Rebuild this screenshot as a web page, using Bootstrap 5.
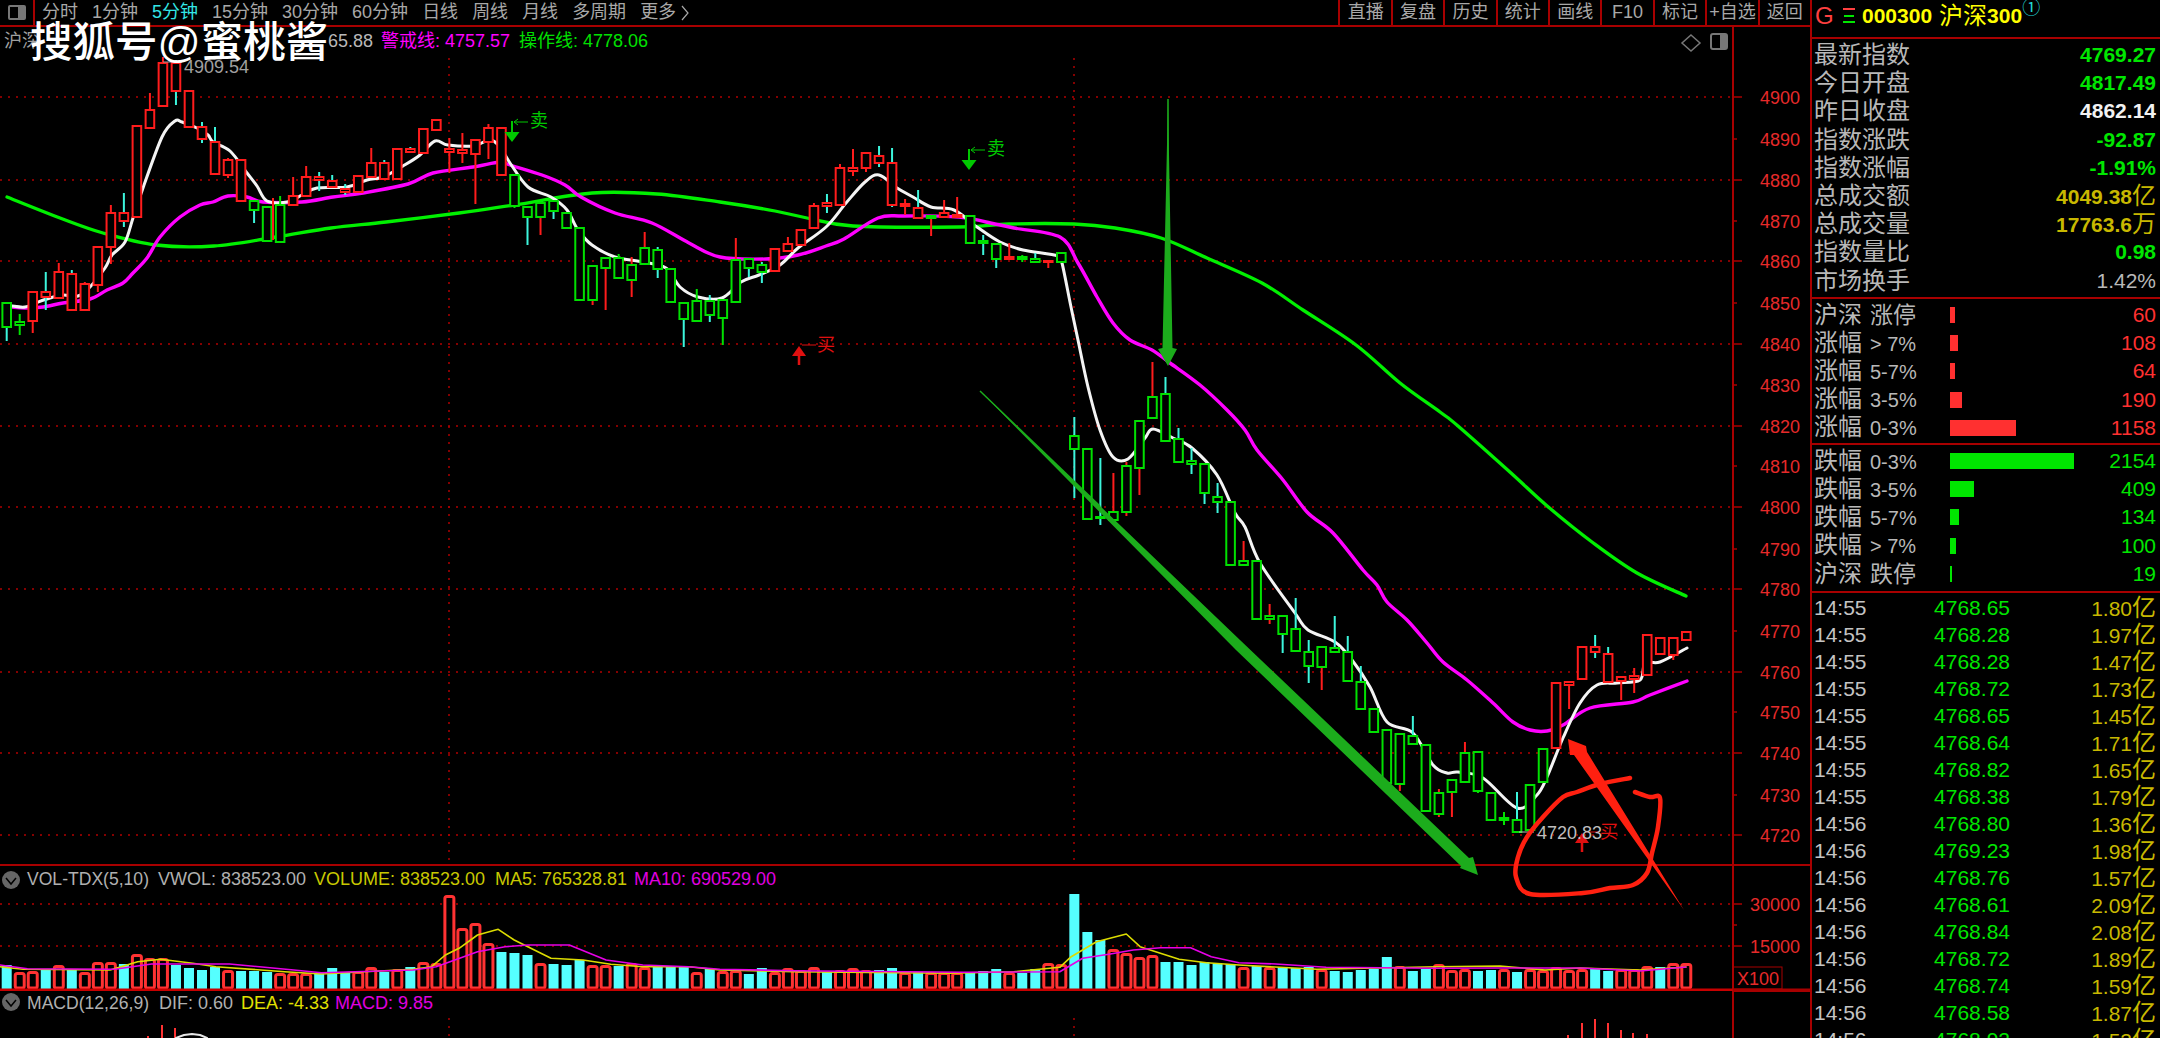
<!DOCTYPE html>
<html lang="zh-CN">
<head>
<meta charset="utf-8">
<title>沪深300</title>
<link href="https://cdn.jsdelivr.net/npm/bootstrap@5.3.0/dist/css/bootstrap.min.css" rel="stylesheet">
<style>
html,body{height:1038px;overflow:hidden;background:#000;}
body{font-family:"Liberation Sans","Noto Sans CJK SC",sans-serif;color:#b8b8b8;}
.shell{width:2160px;height:1038px;}
.leftside{width:1810px;}
.toolbar{height:27px;border-bottom:2px solid #a80000;font-size:18px;line-height:25px;white-space:nowrap;}
.tool-icon{width:35px;height:25px;border-right:2px solid #a80000;}
.tool-glyph{width:18px;height:15px;border:2px solid #777;border-radius:2px;background:linear-gradient(90deg,transparent 60%,#777 60%);}
.period-list{gap:14px;padding-left:7px;color:#a8a8a8;}
.period-active{color:#33e6e6;}
.tool-btn{width:52.4px;text-align:center;border-left:2px solid #a80000;color:#a8a8a8;}
.chartbox{height:1011px;}
.chartsvg{display:block;width:1810px;height:1011px;}
.chartsvg text{font-family:"Liberation Sans","Noto Sans CJK SC",sans-serif;font-size:18px;}
.watermark{position:absolute;left:30px;top:14px;font-size:42.5px;line-height:58px;color:#fff;font-weight:500;white-space:nowrap;}
.sidepanel{width:350px;border-left:2px solid #a80000;padding-left:2px;}
.headbar{height:39px;border-bottom:2px solid #a80000;font-size:21px;line-height:32px;color:#ff0;font-weight:700;margin-left:-2px;padding-left:3px;padding-bottom:6px;white-space:nowrap;}
.code-g{color:#ff4040;width:28px;font-weight:400;font-size:24px;}
.code-bars{width:12px;height:15px;border-top:2px solid #ff4040;border-bottom:2px solid #00e600;position:relative;margin-right:7px;}
.code-bars::after{content:"";position:absolute;left:1px;right:1px;top:4.5px;height:2px;background:#00e600;}
.code-cn{font-weight:400;font-size:24px;margin:0 0 0 7px;}
.code-sup{color:#22d8d8;font-weight:400;font-size:18px;line-height:16px;}
.rowsblock{padding-top:2px;padding-right:4px;}
.inforow{height:28.2px;line-height:28.2px;font-size:24px;white-space:nowrap;}
.valnum{font-size:21px;font-weight:700;}
.valnum span{font-size:24px;font-weight:400;}
.v-green{color:#00e600;}
.v-white{color:#f2f2f2;}
.v-olive{color:#c8b800;}
.v-gray{color:#b8b8b8;font-weight:400;}
.v-red{color:#ff3030;font-weight:400;}
.v-greenlite{color:#00e600;font-weight:400;}
.divider{height:2px;background:#a80000;margin-left:-2px;}
.block-info{height:258px;}
.block-up{height:144px;}
.block-down{height:146px;}
.lab-pct{font-size:20px;margin-left:8px;}
.lab-stop{font-size:23px;margin-left:8px;}
.lab-cell{width:136px;}
.barcell{width:126px;}
.bar-up{height:16px;background:#ff3030;}
.bar-down{height:16px;background:#00e600;}
.tradelist{padding-right:4px;padding-top:1px;}
.traderow{height:27px;line-height:27px;font-size:21px;white-space:nowrap;}
.t-time{width:110px;color:#c4c4c4;}
.t-price{width:86px;text-align:right;color:#00e600;}
.t-amt{text-align:right;color:#c8b800;}
.t-amt span{font-size:24px;}
</style>
</head>
<body>
<div class="shell d-flex">
  <div class="leftside d-flex flex-column position-relative">
    <div class="toolbar d-flex justify-content-between">
      <div class="d-flex">
        <div class="tool-icon d-flex align-items-center justify-content-center"><div class="tool-glyph"></div></div>
        <div class="period-list d-flex">
          <span>分时</span><span>1分钟</span><span class="period-active">5分钟</span><span>15分钟</span><span>30分钟</span><span>60分钟</span><span>日线</span><span>周线</span><span>月线</span><span>多周期</span>
          <span>更多 <svg width="8" height="16" viewBox="0 0 8 16"><path d="M1 1l6 7-6 7" fill="none" stroke="#a8a8a8" stroke-width="1.2"/></svg></span>
        </div>
      </div>
      <div class="d-flex pe-0">
        <span class="tool-btn">直播</span><span class="tool-btn">复盘</span><span class="tool-btn">历史</span><span class="tool-btn">统计</span><span class="tool-btn">画线</span><span class="tool-btn">F10</span><span class="tool-btn">标记</span><span class="tool-btn">+自选</span><span class="tool-btn">返回</span>
      </div>
    </div>
    <div class="chartbox">
      <svg class="chartsvg" id="chart" viewBox="0 27 1810 1011" xmlns="http://www.w3.org/2000/svg"></svg>
    </div>
    <div class="watermark">搜狐号@蜜桃酱</div>
  </div>
  <aside class="sidepanel flex-grow-1 overflow-hidden">
    <div class="headbar d-flex align-items-center">
      <span class="code-g">G</span><span class="code-bars"></span><span>000300</span><span class="code-cn">沪深</span><span>300</span><span class="code-sup align-self-start">①</span>
    </div>
    <div class="block-info rowsblock">
      <div class="inforow d-flex justify-content-between"><span>最新指数</span><span class="valnum v-green">4769.27</span></div>
      <div class="inforow d-flex justify-content-between"><span>今日开盘</span><span class="valnum v-green">4817.49</span></div>
      <div class="inforow d-flex justify-content-between"><span>昨日收盘</span><span class="valnum v-white">4862.14</span></div>
      <div class="inforow d-flex justify-content-between"><span>指数涨跌</span><span class="valnum v-green">-92.87</span></div>
      <div class="inforow d-flex justify-content-between"><span>指数涨幅</span><span class="valnum v-green">-1.91%</span></div>
      <div class="inforow d-flex justify-content-between"><span>总成交额</span><span class="valnum v-olive">4049.38<span>亿</span></span></div>
      <div class="inforow d-flex justify-content-between"><span>总成交量</span><span class="valnum v-olive">17763.6<span>万</span></span></div>
      <div class="inforow d-flex justify-content-between"><span>指数量比</span><span class="valnum v-green">0.98</span></div>
      <div class="inforow d-flex justify-content-between"><span>市场换手</span><span class="valnum v-gray">1.42%</span></div>
    </div>
    <div class="divider"></div>
    <div class="block-up rowsblock">
      <div class="inforow d-flex align-items-center"><span class="lab-cell">沪深<span class="lab-stop">涨停</span></span><span class="barcell"><div class="bar-up" style="width:5px"></div></span><span class="valnum v-red ms-auto">60</span></div>
      <div class="inforow d-flex align-items-center"><span class="lab-cell">涨幅<span class="lab-pct">&gt; 7%</span></span><span class="barcell"><div class="bar-up" style="width:8px"></div></span><span class="valnum v-red ms-auto">108</span></div>
      <div class="inforow d-flex align-items-center"><span class="lab-cell">涨幅<span class="lab-pct">5-7%</span></span><span class="barcell"><div class="bar-up" style="width:5px"></div></span><span class="valnum v-red ms-auto">64</span></div>
      <div class="inforow d-flex align-items-center"><span class="lab-cell">涨幅<span class="lab-pct">3-5%</span></span><span class="barcell"><div class="bar-up" style="width:12px"></div></span><span class="valnum v-red ms-auto">190</span></div>
      <div class="inforow d-flex align-items-center"><span class="lab-cell">涨幅<span class="lab-pct">0-3%</span></span><span class="barcell"><div class="bar-up" style="width:66px"></div></span><span class="valnum v-red ms-auto">1158</span></div>
    </div>
    <div class="divider"></div>
    <div class="block-down rowsblock">
      <div class="inforow d-flex align-items-center"><span class="lab-cell">跌幅<span class="lab-pct">0-3%</span></span><span class="barcell"><div class="bar-down" style="width:124px"></div></span><span class="valnum v-greenlite ms-auto">2154</span></div>
      <div class="inforow d-flex align-items-center"><span class="lab-cell">跌幅<span class="lab-pct">3-5%</span></span><span class="barcell"><div class="bar-down" style="width:24px"></div></span><span class="valnum v-greenlite ms-auto">409</span></div>
      <div class="inforow d-flex align-items-center"><span class="lab-cell">跌幅<span class="lab-pct">5-7%</span></span><span class="barcell"><div class="bar-down" style="width:9px"></div></span><span class="valnum v-greenlite ms-auto">134</span></div>
      <div class="inforow d-flex align-items-center"><span class="lab-cell">跌幅<span class="lab-pct">&gt; 7%</span></span><span class="barcell"><div class="bar-down" style="width:6px"></div></span><span class="valnum v-greenlite ms-auto">100</span></div>
      <div class="inforow d-flex align-items-center"><span class="lab-cell">沪深<span class="lab-stop">跌停</span></span><span class="barcell"><div class="bar-down" style="width:1.5px"></div></span><span class="valnum v-greenlite ms-auto">19</span></div>
    </div>
    <div class="divider"></div>
    <div class="tradelist" id="trades">
      <div class="traderow d-flex"><span class="t-time">14:55</span><span class="t-price">4768.65</span><span class="t-amt flex-grow-1">1.80<span>亿</span></span></div>
      <div class="traderow d-flex"><span class="t-time">14:55</span><span class="t-price">4768.28</span><span class="t-amt flex-grow-1">1.97<span>亿</span></span></div>
      <div class="traderow d-flex"><span class="t-time">14:55</span><span class="t-price">4768.28</span><span class="t-amt flex-grow-1">1.47<span>亿</span></span></div>
      <div class="traderow d-flex"><span class="t-time">14:55</span><span class="t-price">4768.72</span><span class="t-amt flex-grow-1">1.73<span>亿</span></span></div>
      <div class="traderow d-flex"><span class="t-time">14:55</span><span class="t-price">4768.65</span><span class="t-amt flex-grow-1">1.45<span>亿</span></span></div>
      <div class="traderow d-flex"><span class="t-time">14:55</span><span class="t-price">4768.64</span><span class="t-amt flex-grow-1">1.71<span>亿</span></span></div>
      <div class="traderow d-flex"><span class="t-time">14:55</span><span class="t-price">4768.82</span><span class="t-amt flex-grow-1">1.65<span>亿</span></span></div>
      <div class="traderow d-flex"><span class="t-time">14:55</span><span class="t-price">4768.38</span><span class="t-amt flex-grow-1">1.79<span>亿</span></span></div>
      <div class="traderow d-flex"><span class="t-time">14:56</span><span class="t-price">4768.80</span><span class="t-amt flex-grow-1">1.36<span>亿</span></span></div>
      <div class="traderow d-flex"><span class="t-time">14:56</span><span class="t-price">4769.23</span><span class="t-amt flex-grow-1">1.98<span>亿</span></span></div>
      <div class="traderow d-flex"><span class="t-time">14:56</span><span class="t-price">4768.76</span><span class="t-amt flex-grow-1">1.57<span>亿</span></span></div>
      <div class="traderow d-flex"><span class="t-time">14:56</span><span class="t-price">4768.61</span><span class="t-amt flex-grow-1">2.09<span>亿</span></span></div>
      <div class="traderow d-flex"><span class="t-time">14:56</span><span class="t-price">4768.84</span><span class="t-amt flex-grow-1">2.08<span>亿</span></span></div>
      <div class="traderow d-flex"><span class="t-time">14:56</span><span class="t-price">4768.72</span><span class="t-amt flex-grow-1">1.89<span>亿</span></span></div>
      <div class="traderow d-flex"><span class="t-time">14:56</span><span class="t-price">4768.74</span><span class="t-amt flex-grow-1">1.59<span>亿</span></span></div>
      <div class="traderow d-flex"><span class="t-time">14:56</span><span class="t-price">4768.58</span><span class="t-amt flex-grow-1">1.87<span>亿</span></span></div>
      <div class="traderow d-flex"><span class="t-time">14:56</span><span class="t-price">4768.92</span><span class="t-amt flex-grow-1">1.53<span>亿</span></span></div>
    </div>
  </aside>
</div>
<script src="https://cdn.jsdelivr.net/npm/bootstrap@5.3.0/dist/js/bootstrap.bundle.min.js"></script>
<script>
(function(){
var RED='#ff1c1c',GRN='#00e000',CY='#3cf5dc',DR='#a80000';
var X=function(i){return 6.7+13.02*i;};
var s='';
function line(x1,y1,x2,y2,c,w,d){s+='<line x1="'+x1+'" y1="'+y1+'" x2="'+x2+'" y2="'+y2+'" stroke="'+c+'" stroke-width="'+(w||1)+'"'+(d?' stroke-dasharray="'+d+'"':'')+'/>';}
function poly(p,c,w){s+='<polyline points="'+p.map(function(a){return a.join(',');}).join(' ')+'" fill="none" stroke="'+c+'" stroke-width="'+w+'" stroke-linejoin="round" stroke-linecap="round"/>';}
function smooth(p,c,w){
 var d='M'+p[0][0]+' '+p[0][1];
 for(var i=0;i<p.length-1;i++){
  var a=p[Math.max(i-1,0)],b=p[i],e=p[i+1],f=p[Math.min(i+2,p.length-1)];
  d+='C'+(b[0]+(e[0]-a[0])/6).toFixed(1)+' '+(b[1]+(e[1]-a[1])/6).toFixed(1)+' '+(e[0]-(f[0]-b[0])/6).toFixed(1)+' '+(e[1]-(f[1]-b[1])/6).toFixed(1)+' '+e[0]+' '+e[1];
 }
 s+='<path d="'+d+'" fill="none" stroke="'+c+'" stroke-width="'+w+'" stroke-linejoin="round" stroke-linecap="round"/>';
}
function txt(x,y,t,c,extra){s+='<text x="'+x+'" y="'+y+'" fill="'+c+'" '+(extra||'')+'>'+t+'</text>';}
var DOT='2 6';
/* grid */
[97,180,261,344,426,507,589,672,753,835,904,946].forEach(function(y){line(0,y,1733,y,'#b00000',1.5,DOT);});
line(449,58,449,860,'#b00000',1.5,DOT);line(1074,58,1074,860,'#b00000',1.5,DOT);
line(449,1018,449,1038,'#b00000',1.5,DOT);line(1074,1018,1074,1038,'#b00000',1.5,DOT);
/* panes */
line(0,865,1810,865,DR,2);
line(1733,27,1733,1038,DR,2);
/* top right glyphs */
s+='<polygon points="1691,35 1700,43 1691,51 1682,43" fill="none" stroke="#777" stroke-width="1.5"/>';
s+='<rect x="1711" y="34" width="16" height="15" rx="2" fill="none" stroke="#777" stroke-width="2"/><rect x="1720" y="35" width="6" height="13" fill="#777"/>';
/* axis */
[[97,'4900',1],[139,'4890',0],[180,'4880',1],[221,'4870',0],[261,'4860',1],[303,'4850',0],[344,'4840',1],[385,'4830',0],[426,'4820',1],[466,'4810',0],[507,'4800',1],[549,'4790',0],[589,'4780',1],[631,'4770',0],[672,'4760',1],[712,'4750',0],[753,'4740',1],[795,'4730',0],[835,'4720',1],[904,'30000',1],[946,'15000',1]].forEach(function(a){
 line(1733,a[0],a[2]?1742:1737,a[0],DR,1.5);
 txt(1800,a[0]+7,a[1],'#e62a2a','text-anchor="end"');
});
line(1733,925,1737,925,DR,1.5);
/* lines */
var white=[[12,306],[25,307],[38,302],[50,298],[63,295],[78,296],[90,287],[105,268],[112,255],[125,242],[133,218],[143,188],[162,137],[175,121],[182,122],[197,128],[208,135],[213,142],[230,151],[247,173],[257,186],[267,201],[287,202],[302,195],[317,188],[347,187],[367,180],[383,177],[403,166],[420,155],[435,141],[448,145],[473,146],[490,140],[500,147],[510,163],[528,187],[551,197],[567,210],[578,230],[592,245],[615,257],[643,262],[666,268],[680,287],[698,297],[722,298],[741,282],[759,275],[780,265],[798,248],[826,227],[846,203],[865,182],[879,175],[897,188],[913,197],[931,207],[954,210],[977,227],[1000,242],[1023,250],[1058,256],[1062,263],[1071,307],[1078,340],[1088,387],[1100,430],[1113,457],[1128,459],[1145,438],[1153,429],[1173,438],[1192,448],[1217,475],[1235,513],[1245,527],[1260,563],[1295,613],[1308,630],[1335,642],[1352,660],[1370,687],[1387,722],[1413,733],[1433,765],[1447,773],[1458,772],[1483,778],[1517,808],[1537,795],[1547,777],[1563,738],[1580,703],[1597,685],[1617,683],[1640,680],[1645,663],[1660,662],[1687,648]];
var mag=[[12,307],[25,308],[43,307],[63,303],[90,299],[107,290],[123,283],[133,273],[147,258],[160,237],[180,217],[200,205],[213,202],[228,196],[247,197],[263,202],[302,202],[333,197],[363,193],[408,184],[433,173],[473,167],[500,162],[510,165],[542,175],[565,185],[581,197],[615,213],[652,223],[689,243],[720,257],[766,259],[798,255],[826,246],[844,239],[878,218],[904,216],[959,217],[986,222],[1014,228],[1060,237],[1078,263],[1097,297],[1113,323],[1130,340],[1152,350],[1170,363],[1200,385],[1227,410],[1245,430],[1257,450],[1283,480],[1307,512],[1333,533],[1363,570],[1377,585],[1387,602],[1407,620],[1427,643],[1443,662],[1467,680],[1493,703],[1513,722],[1530,730],[1547,731],[1563,725],[1590,708],[1633,702],[1650,695],[1687,681]];
var grn=[[7,197],[60,218],[103,233],[156,245],[214,246],[276,237],[331,228],[386,222],[459,213],[514,205],[592,193],[657,194],[720,202],[775,211],[807,218],[853,226],[959,227],[1009,224],[1074,224],[1115,228],[1161,238],[1207,258],[1262,283],[1303,310],[1356,345],[1400,383],[1440,412],[1458,426],[1511,473],[1546,505],[1592,542],[1637,573],[1686,596]];
smooth(grn,'#00f000',3.3);smooth(mag,'#ff00ff',3.4);smooth(white,'#f4f4f4',3);
/* candles: wickTop, bodyTop, bodyBottom, wickBottom, body, wick */
var C=[[303,303,327,341,'g','c'],[314,322,325,335,'g','g'],[292,292,321,333,'r','r'],[272,292,297,310,'r','c'],[263,272,298,298,'r','r'],[270,274,310,310,'r','c'],[282,284,310,310,'r','r'],[247,247,285,292,'r','r'],[205,213,247,264,'r','r'],[193,213,221,227,'r','c'],[126,126,217,217,'r','r'],[93,110,128,128,'r','r'],[57,63,106,106,'r','r'],[60,63,91,105,'r','c'],[91,91,127,127,'r','r'],[122,127,139,143,'r','c'],[127,142,174,175,'r','c'],[158,160,175,178,'r','r'],[160,160,201,202,'r','c'],[201,201,210,223,'g','c'],[207,207,241,241,'g','g'],[196,205,242,242,'g','g'],[177,196,205,205,'r','r'],[166,177,196,196,'r','r'],[172,177,180,191,'r','c'],[175,181,187,187,'r','c'],[184,189,192,195,'r','c'],[175,176,192,192,'r','r'],[148,163,177,177,'r','r'],[160,163,179,179,'r','c'],[149,149,179,179,'r','r'],[147,149,152,152,'r','c'],[129,129,153,153,'r','r'],[120,120,130,130,'r','r'],[138,149,152,173,'r','r'],[133,150,153,163,'r','r'],[140,140,154,204,'r','r'],[124,128,142,159,'r','r'],[128,128,175,175,'r','r'],[175,175,206,208,'g','g'],[207,207,217,245,'g','c'],[203,203,217,235,'g','r'],[201,201,211,219,'g','c'],[213,213,228,229,'g','g'],[228,228,300,300,'g','g'],[266,266,300,305,'g','r'],[258,258,268,310,'g','r'],[254,258,278,278,'g','g'],[257,265,280,297,'g','r'],[232,248,264,264,'g','r'],[247,250,269,278,'g','c'],[269,269,302,302,'g','g'],[303,303,319,347,'g','c'],[289,301,321,321,'g','g'],[295,301,315,322,'g','c'],[300,300,318,345,'g','g'],[238,260,302,302,'g','r'],[259,259,268,277,'g','c'],[262,265,272,283,'g','c'],[249,249,271,271,'r','r'],[237,244,251,251,'r','r'],[230,230,245,245,'r','r'],[203,206,228,228,'r','r'],[194,203,206,213,'r','c'],[164,168,205,205,'r','r'],[149,168,171,176,'r','r'],[153,153,168,172,'r','r'],[146,156,163,167,'r','c'],[148,163,205,207,'r','c'],[199,204,206,215,'r','r'],[190,208,218,218,'r','c'],[216,216,218,236,'g','r'],[200,213,217,217,'r','r'],[197,215,217,217,'r','r'],[216,216,243,243,'g','g'],[235,241,243,255,'g','c'],[244,244,259,268,'g','c'],[243,257,259,259,'r','r'],[255,257,259,262,'g','g'],[253,259,262,262,'g','c'],[261,261,262,268,'r','r'],[253,253,262,262,'g','r'],[417,436,449,498,'g','c'],[449,449,519,519,'g','g'],[458,517,518,525,'g','c'],[473,512,520,520,'g','r'],[462,466,512,516,'g','r'],[421,421,468,495,'g','r'],[362,397,418,418,'g','r'],[377,394,441,441,'g','c'],[428,439,462,463,'g','c'],[448,461,464,474,'g','c'],[464,464,493,504,'g','c'],[483,497,502,513,'g','c'],[502,502,565,565,'g','g'],[541,561,565,565,'g','r'],[561,561,619,620,'g','c'],[604,616,619,624,'g','r'],[616,616,634,653,'g','c'],[598,629,651,651,'g','c'],[640,652,666,683,'g','c'],[647,647,667,690,'g','r'],[616,648,652,652,'g','c'],[636,652,681,681,'g','c'],[666,682,709,709,'g','c'],[709,709,732,732,'g','g'],[730,730,783,783,'g','g'],[734,734,784,791,'g','r'],[716,736,744,744,'g','c'],[745,745,811,811,'g','g'],[789,793,814,817,'g','r'],[780,780,792,817,'g','r'],[742,753,782,782,'g','r'],[752,752,791,793,'g','g'],[793,793,820,820,'g','g'],[812,818,820,825,'g','g'],[792,820,832,832,'g','c'],[785,785,830,830,'g','r'],[749,749,782,782,'g','g'],[683,683,748,748,'r','r'],[682,682,685,709,'r','r'],[647,647,679,679,'r','r'],[635,647,652,658,'r','c'],[647,654,682,682,'r','c'],[677,677,681,700,'r','r'],[668,676,679,693,'r','r'],[635,635,675,675,'r','r'],[638,638,654,654,'r','r'],[638,638,655,660,'r','r'],[632,632,640,640,'r','r']];
var col={r:RED,g:GRN,c:CY};
C.forEach(function(k,i){
 var x=X(i);
 line(x,k[0],x,k[3],col[k[5]],2);
 s+='<rect x="'+(x-4.3)+'" y="'+k[1]+'" width="8.6" height="'+Math.max(k[2]-k[1],1)+'" fill="#000" stroke="'+col[k[4]]+'" stroke-width="2"/>';
});
line(273,198,273,240,RED,2);
/* chart labels */
txt(4,47,'沪深','#a0a0a0');
txt(328,47,'65.88','#b8b8b8');
txt(381,47,'警戒线: 4757.57','#ff00ff');
txt(519,47,'操作线: 4778.06','#00e000');
txt(184,73,'4909.54','#a0a0a0');
line(163,62,182,62,'#a0a0a0',1);
/* signals */
function sell(x,y){
 line(x,y,x,y+13,'#00c800',2);
 s+='<polygon points="'+(x-7.5)+','+(y+11)+' '+(x+7.5)+','+(y+11)+' '+x+','+(y+21)+'" fill="#00c800"/>';
 line(x+2,y+1,x+16,y+1,'#00c800',1);
 s+='<path d="M'+(x+6)+' '+(y-2)+'L'+(x+2)+' '+(y+1)+'L'+(x+6)+' '+(y+4)+'" fill="none" stroke="#00c800"/>';
 txt(x+18,y+6,'卖','#00c800');
}
sell(512,121);sell(969,149);
function buy(x,y){
 line(x,y,x,y+12,'#e01010',2.5);
 s+='<polygon points="'+(x-7)+','+(y+3)+' '+(x+7)+','+(y+3)+' '+x+','+(y-7)+'" fill="#e01010"/>';
 line(x+3,y-8,x+17,y-8,'#e01010',1);
 txt(x+18,y-2,'买','#e01010');
}
buy(799,353);buy(1582,840);
txt(1537,839,'4720.83','#bdbdbd');
line(1519,832,1534,832,'#bdbdbd',1);
/* volume header */
function hdrIcon(cx,cy){
 s+='<circle cx="'+cx+'" cy="'+cy+'" r="9" fill="#666"/><path d="M'+(cx-5)+' '+(cy-2)+'L'+cx+' '+(cy+4)+'L'+(cx+5)+' '+(cy-2)+'" fill="none" stroke="#000" stroke-width="1.5"/>';
}
hdrIcon(11,880);
txt(27,885,'VOL-TDX(5,10)','#b0b0b0','textLength="122" lengthAdjust="spacingAndGlyphs"');
txt(158,885,'VWOL: 838523.00','#b0b0b0');
txt(314,885,'VOLUME: 838523.00','#c8c800');
txt(495,885,'MA5: 765328.81','#c8c800');
txt(634,885,'MA10: 690529.00','#e000e0');
/* volume bars: top y (full) */
var V=[[0,965],[1,972],[1,971],[0,970],[1,965],[0,970],[1,972],[1,962],[1,962],[0,964],[1,954],[1,958],[1,958],[0,965],[0,968],[0,970],[0,967],[1,970],[0,971],[0,971],[0,972],[1,973],[1,973],[1,973],[0,973],[0,968],[0,972],[1,971],[1,967],[0,972],[1,969],[0,967],[1,962],[1,963],[1,895],[1,928],[1,923],[1,943],[0,952],[0,953],[0,955],[1,963],[0,964],[0,965],[0,960],[1,965],[1,965],[0,966],[1,963],[1,967],[0,967],[0,967],[0,967],[1,972],[0,969],
[1,971],[1,970],[0,974],[0,968],[1,972],[1,968],[1,970],[1,967],[0,972],[1,970],[1,968],[1,970],[0,970],[0,968],[1,972],[0,972],[1,972],[1,972],[1,972],[0,973],[0,971],[0,969],[1,972],[0,973],[0,969],[1,963],[1,964],[0,894],[0,932],[0,940],[1,949],[1,953],[1,957],[1,955],[0,962],[0,962],[0,965],[0,962],[0,964],[0,964],[1,967],[0,966],[1,967],[0,967],[0,968],[0,967],[1,969],[0,971],[0,972],[0,970],[0,969],[0,957],[1,966],[0,971],[0,969],[1,964],
[1,970],[1,969],[0,971],[0,970],[1,969],[0,972],[1,969],[1,970],[1,967],[1,970],[1,969],[0,968],[0,971],[1,969],[1,969],[1,966],[0,967],[1,963],[1,963]];
V.forEach(function(v,i){
 var x=X(i);
 if(v[0]) s+='<rect x="'+(x-4.5)+'" y="'+(v[1]+1.5)+'" width="9" height="'+(988-v[1]-1.5)+'" fill="#000" stroke="#ff3232" stroke-width="3" rx="2"/>';
 else s+='<rect x="'+(x-5)+'" y="'+v[1]+'" width="10" height="'+(989-v[1])+'" fill="#55ffff"/>';
});
function zc(ox,pts){return pts.map(function(p){return [+(p[0]/2.178+ox).toFixed(1),+(p[1]/3+850).toFixed(1)];});}
var yl=zc(0,[[0,350],[50,358],[240,360],[300,335],[350,328],[420,340],[470,350],[620,365],[700,372],[900,358],[940,350],[970,315],[1000,295],[1040,255],[1085,238],[1120,270],[1200,325],[1270,330],[1330,343],[1400,350],[1500,350],[1568,360]]).concat(zc(720,[[160,365],[500,370],[640,365],[740,352],[765,320],[820,275],[885,252],[915,290],[1000,328],[1060,338],[1130,345],[1300,358],[1560,350]])).concat([[1500,966],[1545,970],[1580,968],[1640,970],[1686,967]]);
var mg=zc(0,[[0,345],[60,356],[250,358],[330,342],[500,342],[640,360],[700,368],[900,360],[950,350],[980,335],[1040,305],[1100,290],[1150,285],[1240,285],[1320,330],[1400,345],[1500,350],[1568,358]]).concat(zc(720,[[160,362],[530,367],[740,365],[790,325],[850,312],[900,300],[960,293],[1025,293],[1070,320],[1130,338],[1210,342],[1320,352],[1560,355]])).concat([[1500,968],[1580,968],[1640,971],[1686,967]]);
poly(yl,'#dcdc00',1.6);poly(mg,'#e600e6',1.6);
/* baseline */
s+='<rect x="0" y="988.5" width="1733" height="2.5" fill="#c80000"/><rect x="1733" y="988.5" width="77" height="3.5" fill="#a80000"/>';
/* X100 */
s+='<rect x="1733" y="967" width="49" height="22" fill="none" stroke="#a80000" stroke-width="1"/>';
txt(1737,985,'X100','#e62a2a');
/* MACD */
hdrIcon(11,1002);
txt(27,1009,'MACD(12,26,9)','#b0b0b0','textLength="122" lengthAdjust="spacingAndGlyphs"');
txt(159,1009,'DIF: 0.60','#b0b0b0');
txt(241,1009,'DEA: -4.33','#e0e000');
txt(335,1009,'MACD: 9.85','#e000e0');
[[148,1036],[162,1025],[175,1028],[1568,1035],[1582,1023],[1595,1019],[1608,1023],[1621,1030],[1633,1033],[1647,1034]].forEach(function(a){line(a[0],a[1],a[0],1038,'#ff3232',2);});
poly([[176,1038],[184,1035],[192,1034],[200,1035],[207,1038]],'#e8e8e8',2);
/* hand drawn marks */
line(1168,99,1168,200,'#1cac1c',1.5);
s+='<polygon points="1168,99 1172.5,348 1177,349 1168,366 1158,349 1162.5,348" fill="#1cac1c"/>';
line(980,391,1100,506,'#1cac1c',1.5);
s+='<polygon points="980,391 1240,640 1469,858 1473,857 1478,875 1460,868 1461,866 1236,650" fill="#1cac1c"/>';
s+='<polygon points="1568,739 1586,746 1587,752 1684,910 1574,755 1570,755" fill="#ff2010"/>';
smooth([[1630,778],[1600,784],[1577,792],[1563,797],[1543,817],[1527,837],[1518,857],[1516,877],[1530,894],[1583,893],[1610,888],[1633,885],[1647,873],[1652,853],[1658,827],[1660,798],[1650,797],[1635,792]],'#ff2010',4.5);
document.getElementById('chart').innerHTML=s;
})();
</script>
</body>
</html>
